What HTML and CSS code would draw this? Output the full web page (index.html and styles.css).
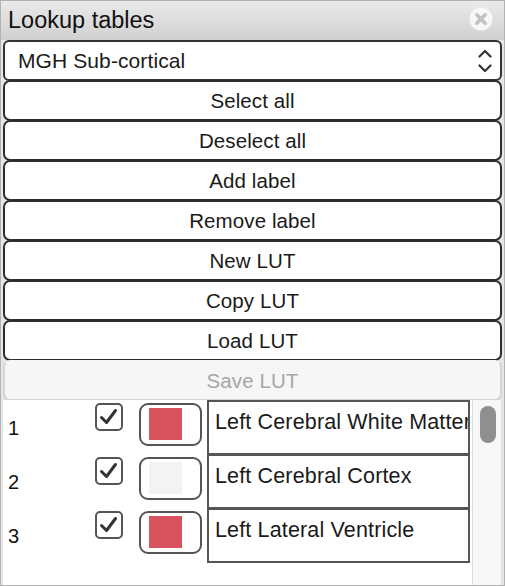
FILE: index.html
```html
<!DOCTYPE html>
<html>
<head>
<meta charset="utf-8">
<link rel="stylesheet" href="styles.css">
</head>
<body>
<div class="window">
  <div class="titlebar">
    <span class="title">Lookup tables</span>
    <svg class="close" width="24" height="24" viewBox="0 0 24 24">
      <circle cx="12" cy="12" r="11.5" fill="#f7f7f7"/>
      <path d="M7.8 7.8 L16.2 16.2 M16.2 7.8 L7.8 16.2" stroke="#c2c2c2" stroke-width="3.6" stroke-linecap="round"/>
    </svg>
  </div>
  <div class="content">
    <div class="combo">
      <span>MGH Sub-cortical</span>
      <svg class="chev" width="14" height="24" viewBox="0 0 14 24">
        <path d="M1.5 7.5 L7 2 L12.5 7.5 M1.5 16.5 L7 22 L12.5 16.5" fill="none" stroke="#333" stroke-width="2.2" stroke-linecap="round" stroke-linejoin="round"/>
      </svg>
    </div>
    <div class="btn">Select all</div>
    <div class="btn">Deselect all</div>
    <div class="btn">Add label</div>
    <div class="btn">Remove label</div>
    <div class="btn">New LUT</div>
    <div class="btn">Copy LUT</div>
    <div class="btn">Load LUT</div>
    <div class="btn disabled">Save LUT</div>
    <div class="list">
      <div class="rows">
        <div class="row">
          <div class="num">1</div>
          <div class="check"><svg width="24" height="24" viewBox="0 0 24 24"><path d="M4.5 12.5 L9.5 17.5 L18.5 5.5" fill="none" stroke="#333" stroke-width="3" stroke-linecap="round" stroke-linejoin="round"/></svg></div>
          <div class="colorbtn"><div class="swatch red"></div></div>
          <div class="field">Left Cerebral White Matter</div>
        </div>
        <div class="row">
          <div class="num">2</div>
          <div class="check"><svg width="24" height="24" viewBox="0 0 24 24"><path d="M4.5 12.5 L9.5 17.5 L18.5 5.5" fill="none" stroke="#333" stroke-width="3" stroke-linecap="round" stroke-linejoin="round"/></svg></div>
          <div class="colorbtn"><div class="swatch light"></div></div>
          <div class="field">Left Cerebral Cortex</div>
        </div>
        <div class="row">
          <div class="num">3</div>
          <div class="check"><svg width="24" height="24" viewBox="0 0 24 24"><path d="M4.5 12.5 L9.5 17.5 L18.5 5.5" fill="none" stroke="#333" stroke-width="3" stroke-linecap="round" stroke-linejoin="round"/></svg></div>
          <div class="colorbtn"><div class="swatch red"></div></div>
          <div class="field">Left Lateral Ventricle</div>
        </div>
      </div>
      <div class="scrollbar"><div class="thumb"></div></div>
    </div>
  </div>
</div>
</body>
</html>
```
FILE: styles.css
```css
html, body {
  margin: 0;
  padding: 0;
}
body {
  width: 505px;
  height: 586px;
  overflow: hidden;
  font-family: "Liberation Sans", Arial, sans-serif;
  color: #1a1a1a;
}
.window {
  box-sizing: border-box;
  width: 505px;
  height: 586px;
  border: 1px solid #b2b2b2;
  background: #e6e6e6;
  display: flex;
  flex-direction: column;
}
.titlebar {
  height: 39px;
  flex: none;
  display: flex;
  align-items: center;
  justify-content: space-between;
  padding: 0 11px 0 7px;
  background: linear-gradient(#eaeaea, #d0d0d0);
}
.title {
  font-size: 23.5px;
  line-height: 39px;
  color: #111;
}
.close {
  display: block;
  margin-top: -4px;
}
.content {
  flex: 1;
  display: flex;
  flex-direction: column;
  padding: 0 2px;
  min-height: 0;
}
.combo {
  box-sizing: border-box;
  height: 41px;
  flex: none;
  border: 2px solid #333;
  border-radius: 6px;
  background: #fff;
  display: flex;
  align-items: center;
  justify-content: space-between;
  padding: 0 8px 0 13px;
  font-size: 21px;
  letter-spacing: 0.1px;
}
.chev {
  display: block;
}
.btn {
  box-sizing: border-box;
  height: 41px;
  flex: none;
  margin-top: -1px;
  border: 2px solid #2e2e2e;
  border-radius: 7px;
  background: #fff;
  display: flex;
  align-items: center;
  justify-content: center;
  font-size: 20.5px;
  letter-spacing: 0.1px;
  color: #1a1a1a;
}
.btn.disabled {
  background: #f6f6f6;
  border-color: #d4d4d4;
  border-top-color: transparent;
  color: #a6a6a6;
}
.list {
  flex: 1;
  display: flex;
  min-height: 0;
  overflow: hidden;
  margin-top: -1px;
}
.rows {
  width: 470px;
  background: #fff;
  overflow: hidden;
}
.row {
  height: 54px;
  display: flex;
  align-items: flex-start;
}
.num {
  box-sizing: border-box;
  width: 92px;
  padding-left: 5px;
  margin-top: 16px;
  font-size: 20px;
  line-height: 24px;
  color: #111;
}
.check {
  box-sizing: border-box;
  width: 28px;
  height: 28px;
  margin-top: 3px;
  border: 2px solid #555;
  border-radius: 5px;
  background: #fff;
  display: flex;
  align-items: center;
  justify-content: center;
}
.check svg {
  display: block;
}
.colorbtn {
  box-sizing: border-box;
  width: 63px;
  height: 43px;
  margin: 3px 0 0 16px;
  border: 2px solid #555;
  border-radius: 9px;
  background: #fff;
  padding: 3px 0 0 8px;
}
.swatch {
  width: 33px;
  height: 32px;
}
.swatch.red {
  background: #d9535f;
}
.swatch.light {
  background: #f3f3f3;
}
.field {
  box-sizing: border-box;
  width: 263px;
  height: 55px;
  flex: none;
  margin-left: 5px;
  border: 2px solid #555;
  background: #fff;
  padding: 8px 0 0 6px;
  font-size: 21.5px;
  letter-spacing: 0.15px;
  line-height: 24px;
  color: #1a1a1a;
  white-space: nowrap;
  overflow: hidden;
}
.scrollbar {
  box-sizing: border-box;
  width: 30px;
  background: #f7f7f7;
  border-left: 1px solid #dcdcdc;
  border-right: 1px solid #dcdcdc;
  padding: 6px 0 0 7px;
}
.thumb {
  width: 16px;
  height: 37px;
  border-radius: 8px;
  background: #8f8f8f;
}
```
